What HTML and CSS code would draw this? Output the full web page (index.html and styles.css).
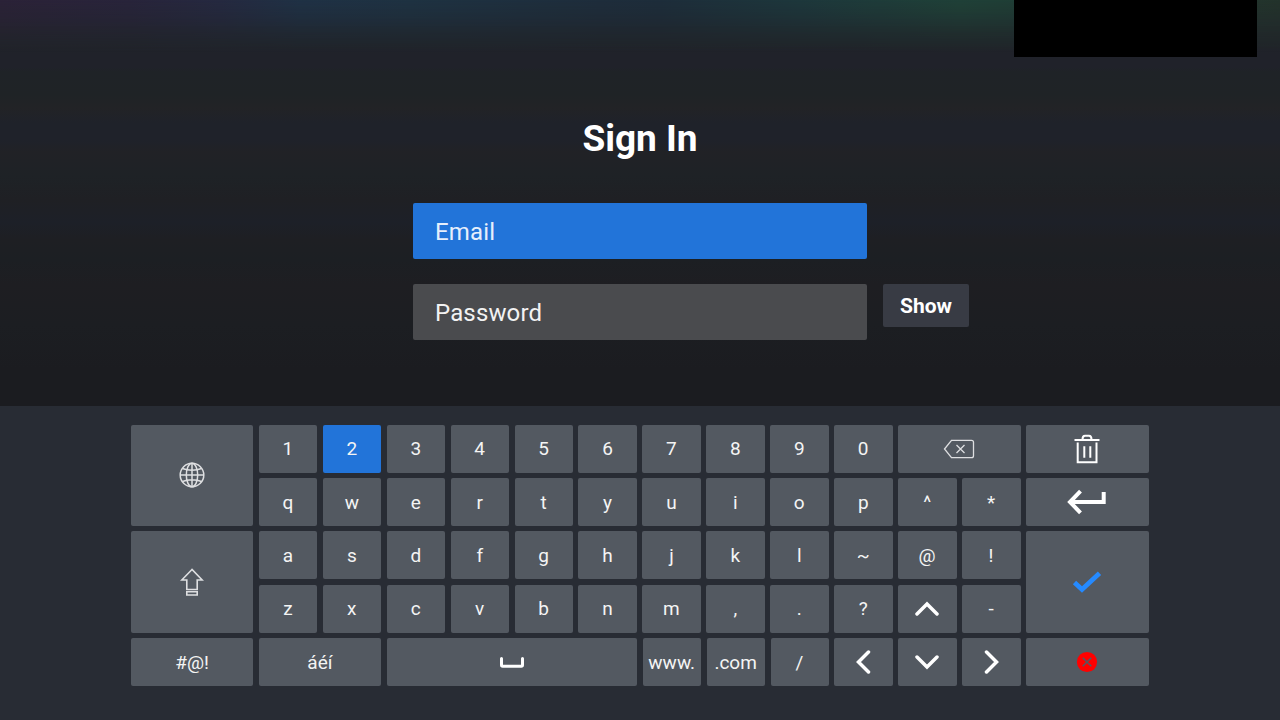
FILE: index.html
```html
<!DOCTYPE html>
<html lang="en">
<head>
<meta charset="utf-8">
<title>Sign In</title>
<link rel="stylesheet" href="styles.css">
</head>
<body>
<main class="screen">
  <section class="signin">
    <div class="glow"></div>
    <div class="corner"></div>
    <h1 class="title">Sign In</h1>
    <div class="form">
      <div class="field field-active">Email</div>
      <div class="field">Password</div>
      <div class="show">Show</div>
    </div>
  </section>
  <section class="keyboard">
    <div class="keys">
      <div class="key wide tall"><svg width="26" height="26" viewBox="0 0 26 26" class="thin globe"><circle cx="13" cy="13" r="11.8"/><ellipse cx="13" cy="13" rx="5.7" ry="11.8"/><path d="M13 1.2v23.6M1.2 13h23.6M3.5 6.5c5.3 2.2 13.7 2.2 19 0M3.5 19.5c5.3-2.2 13.7-2.2 19 0"/></svg></div>
      <div class="key">1</div><div class="key key-active">2</div><div class="key">3</div><div class="key">4</div><div class="key">5</div><div class="key">6</div><div class="key">7</div><div class="key">8</div><div class="key">9</div><div class="key">0</div>
      <div class="key wide"><svg width="32" height="20" viewBox="0 0 32 20" class="thin low"><path d="M1.5 10 8.5 1.3H28.5Q30.5 1.3 30.5 3.3V16.7Q30.5 18.7 28.5 18.7H8.5ZM13.5 6l8 8M21.5 6l-8 8"/></svg></div>
      <div class="key wide edge"><svg width="28" height="30" viewBox="0 0 28 30" class="trash low"><path d="M1.5 6h25M9.5 5.5q0-3.8 2.5-3.8h4q2.5 0 2.5 3.8M4.7 8.5v19.7h18.8V8.5M11.3 12.2v11.5M17.3 12.2v11.5"/></svg></div>

      <div class="key">q</div><div class="key">w</div><div class="key">e</div><div class="key">r</div><div class="key">t</div><div class="key">y</div><div class="key">u</div><div class="key">i</div><div class="key">o</div><div class="key">p</div><div class="key">^</div><div class="key">*</div>
      <div class="key wide edge"><svg width="40" height="26" viewBox="0 0 40 26" class="enter"><path d="M13.5 2.2 3 13l10.5 10.8M3.5 13H36.7V3"/></svg></div>

      <div class="key wide tall"><svg width="24" height="28" viewBox="0 0 24 28" class="thin shift"><path d="M12 1.5 1.8 12H6.8V21.5H17.2V12H22.2ZM6.8 23.7H17.2V27H6.8Z"/></svg></div>
      <div class="key">a</div><div class="key">s</div><div class="key">d</div><div class="key">f</div><div class="key">g</div><div class="key">h</div><div class="key">j</div><div class="key">k</div><div class="key">l</div><div class="key">~</div><div class="key">@</div><div class="key">!</div>
      <div class="key wide tall edge"><svg width="30" height="24" viewBox="0 0 30 24" class="check"><path d="M2.5 12.5 10 19.5 27.5 3.2"/></svg></div>

      <div class="key">z</div><div class="key">x</div><div class="key">c</div><div class="key">v</div><div class="key">b</div><div class="key">n</div><div class="key">m</div><div class="key">,</div><div class="key">.</div><div class="key">?</div>
      <div class="key"><svg width="24" height="24" viewBox="0 0 24 24" class="chevron low"><path d="M2 17 12 7l10 10"/></svg></div>
      <div class="key">-</div>

      <div class="key wide">#@!</div><div class="key wide">áéí</div>
      <div class="key space"><svg width="26" height="14" viewBox="0 0 26 14" class="bar"><path d="M2.5 3.5v6.5q0 1.2 1.2 1.2h18.6q1.2 0 1.2-1.2V3.5"/></svg></div>
      <div class="key inset">www.</div><div class="key inset">.com</div><div class="key inset">/</div>
      <div class="key"><svg width="24" height="24" viewBox="0 0 24 24" class="chevron"><path d="M17.5 2 7.5 12l10 10"/></svg></div>
      <div class="key"><svg width="24" height="24" viewBox="0 0 24 24" class="chevron"><path d="M2 7l10 10L22 7"/></svg></div>
      <div class="key"><svg width="24" height="24" viewBox="0 0 24 24" class="chevron"><path d="M7.5 2l10 10-10 10"/></svg></div>
      <div class="key wide edge"><svg width="22" height="22" viewBox="0 0 22 22" class="close"><circle cx="11" cy="11" r="10.1"/><path d="M6.7 6.7l8.600 8.600M15.300 6.700l-8.600 8.600"/></svg></div>
    </div>
  </section>
</main>
</body>
</html>
```

FILE: styles.css
```css
* { box-sizing: border-box; }
body { margin: 0; background: #1b1c20; font-family: Roboto, sans-serif; color: #fff; }
.screen { width: 1280px; height: 720px; overflow: hidden; display: flex; flex-direction: column; }
.signin {
  position: relative;
  height: 405.6px;
  padding-top: 116px;
  display: flex;
  flex-direction: column;
  align-items: center;
  background: linear-gradient(#20242b 0, #202429 44px, #20222a 54px, #20222a 67px, #1f2327 72px, #1f2326 95px, #222326 108px, #1f222a 123px, #1f222a 140px, #212226 152px, #1e2226 176px, #1f2024 200px, #1d2028 222px, #1e1f23 240px, #1c1f23 260px, #1e1e22 285px, #1c1e22 325px, #1b1c20 370px, #1b1c20 405px);
}
/* Coloured light along the top edge, fading downwards */
.glow {
  position: absolute;
  inset: 0 0 auto 0;
  height: 52px;
  background: linear-gradient(90deg, #2b2237 0, #28243a 130px, #252940 220px, #1f3145 300px, #1e3242 410px, #1e2d3b 600px, #1d2d3a 660px, #1d373b 800px, #1f4137 960px, #1f3e35 1020px, #23332b 1280px);
  -webkit-mask-image: linear-gradient(#000 0, rgba(0, 0, 0, .75) 15px, rgba(0, 0, 0, .3) 34px, transparent 52px);
  mask-image: linear-gradient(#000 0, rgba(0, 0, 0, .75) 15px, rgba(0, 0, 0, .3) 34px, transparent 52px);
}
.corner { position: absolute; top: 0; right: 23px; width: 243px; height: 57px; background: #000; }
.title { margin: 0; font-size: 37px; line-height: 46px; font-weight: 700; }
.form { margin-top: 41px; display: grid; grid-template-columns: 454px 86px; column-gap: 16px; row-gap: 25px; margin-left: 102px; }
.field {
  grid-column: 1;
  height: 56px;
  padding-left: 22px;
  border-radius: 2px;
  background: #4a4b4e;
  color: #f2f2f2;
  font-size: 24px;
  line-height: 58px;
  letter-spacing: .15px;
}
.field-active { background: #2274d9; color: #e6effc; }
.show { grid-column: 2; height: 43px; border-radius: 2px; background: #383b44; font-size: 21px; font-weight: 700; line-height: 44px; text-align: center; }
.keyboard { flex: 1; padding: 19.1px 0 0 130.97px; background: #282c34; }
.keys {
  width: 1017.6px;
  height: 261.5px;
  display: grid;
  grid-template-columns: repeat(16, 58.6px);
  grid-template-rows: repeat(5, 1fr);
  gap: 5.3px 5.33px;
}
.key {
  min-width: 0;
  display: flex;
  align-items: center;
  justify-content: center;
  border-radius: 2px;
  background: #535961;
  color: #f4f4f4;
  font-size: 19px;
  line-height: 24px;
  padding: 1px .4px 0 0;
}
.key-active { background: #2274d9; }
.wide { grid-column: span 2; }
.tall { grid-row: span 2; }
.space { grid-column: span 4; }
.edge { margin-right: -.3px; }
.inset { margin-left: .5px; }
svg { display: block; fill: none; stroke: #fff; margin-top: -2px; }
.low { margin-top: 0; }
.thin { stroke: #dedfe1; stroke-width: 1.3; }
.globe { stroke-width: 1.5; }
.shift { stroke-width: 1.6; }
.trash { stroke-width: 2; }
.enter { stroke-width: 4; }
.check { stroke: #258aff; stroke-width: 4.8; }
.chevron { stroke-width: 3.5; stroke-linecap: round; }
.bar { stroke-width: 3; stroke-linecap: round; }
.close circle { fill: #f00; stroke: none; }
.close path { stroke: #535961; stroke-width: 1.5; }
```
